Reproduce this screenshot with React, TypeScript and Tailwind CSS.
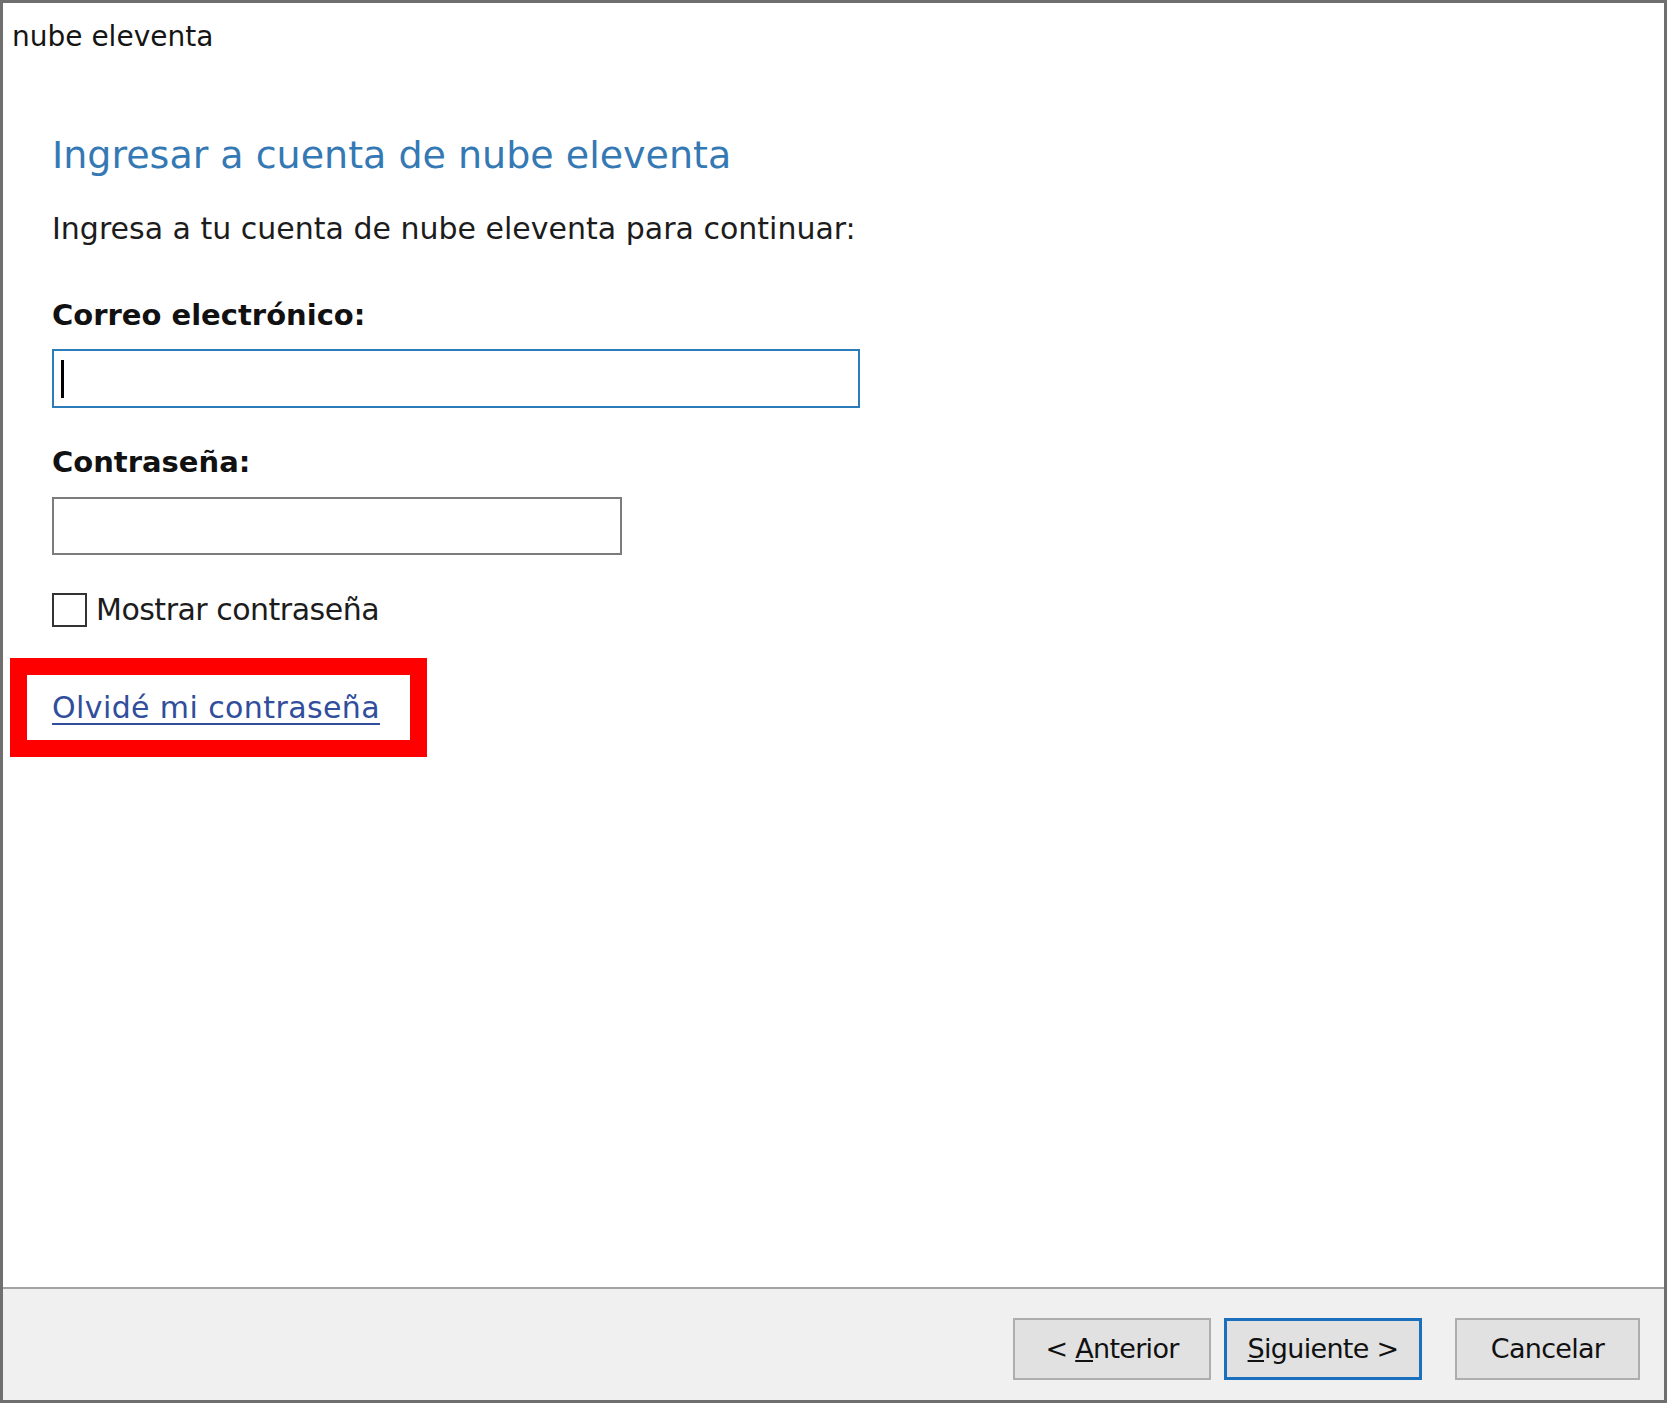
import React from "react";

const font = "font-['DejaVu_Sans',_'Liberation_Sans',_sans-serif]";

function WizardButton({
  children,
  primary = false,
  width = "w-[198px]",
}: {
  children: React.ReactNode;
  primary?: boolean;
  width?: string;
}) {
  return (
    <button
      className={
        "h-[62px] flex items-center justify-center bg-[#e1e1e1] text-[27px] text-[#111] tracking-[-0.7px] " +
        width +
        (primary ? " border-[3px] border-[#1a70bd]" : " border-2 border-[#adadad]")
      }
    >
      {children}
    </button>
  );
}

export default function App() {
  return (
    <div className={"w-[1667px] h-[1405px] bg-white " + font}>
      <div className="h-[1403px] border-[3px] border-[#6f6f6f] flex flex-col relative">
        {/* title bar */}
        <div className="pl-[9px] pt-[17px] text-[28px] leading-[34px] text-[#151515]">
          nube eleventa
        </div>

        {/* content */}
        <div className="flex-1 flex flex-col pl-[49px]">
          <h1 className="mt-[78px] text-[38px] leading-[46px] text-[#3479b4] font-normal">
            Ingresar a cuenta de nube eleventa
          </h1>
          <p className="mt-[33px] text-[30px] leading-[36px] text-[#1c1c1c]">
            Ingresa a tu cuenta de nube eleventa para continuar:
          </p>

          <label className="mt-[50px] text-[29px] leading-[36px] font-bold text-[#111]">
            Correo electrónico:
          </label>
          <div className="mt-[16px] w-[808px] h-[59px] border-2 border-[#2b7cba] flex items-center pl-[7px]">
            <span className="w-[3px] h-[38px] bg-black" />
          </div>

          <label className="mt-[36px] text-[29px] leading-[36px] font-bold text-[#111]">
            Contraseña:
          </label>
          <div className="mt-[17px] w-[570px] h-[58px] border-2 border-[#7c7c7c]" />

          <div className="mt-[38px] h-[34px] flex items-center gap-[9px]">
            <span className="w-[35px] h-[34px] border-2 border-[#333] bg-white" />
            <span className="text-[30px] leading-[34px] text-[#1c1c1c] tracking-[-0.5px]">
              Mostrar contraseña
            </span>
          </div>

          <a
            href="#"
            className="mt-[63px] self-start text-[30px] leading-[36px] text-[#304e9c] underline decoration-2 underline-offset-[5px] tracking-[0.4px]"
          >
            Olvidé mi contraseña
          </a>
        </div>

        {/* annotation box */}
        <div className="absolute left-[7px] top-[655px] w-[417px] h-[99px] border-[17px] border-[#ff0000]" />

        {/* footer */}
        <div className="h-[113px] border-t-2 border-[#a3a3a3] bg-[#f0f0f0] flex justify-end items-start pt-[29px] pr-[24px]">
          <WizardButton>
            &lt;&nbsp;<span className="underline">A</span>nterior
          </WizardButton>
          <div className="ml-[13px]">
            <WizardButton primary>
              <span className="underline">S</span>iguiente&nbsp;&gt;
            </WizardButton>
          </div>
          <div className="ml-[33px]">
            <WizardButton width="w-[185px]">Cancelar</WizardButton>
          </div>
        </div>
      </div>
    </div>
  );
}
